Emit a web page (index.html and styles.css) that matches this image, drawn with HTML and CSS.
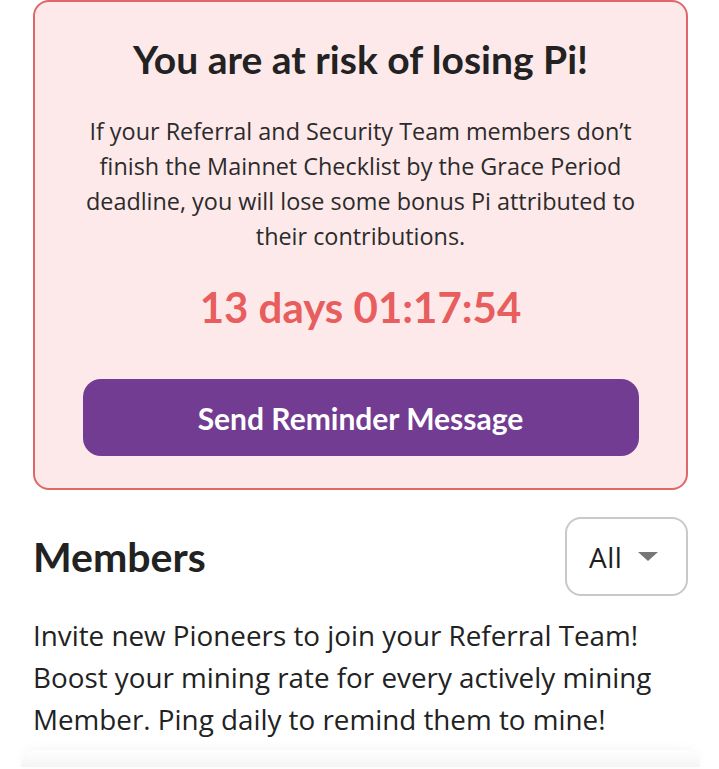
FILE: index.html
```html
<!DOCTYPE html>
<html>
<head>
<meta charset="utf-8">
<link rel="stylesheet" href="styles.css">
</head>
<body>
<div class="page">
  <section class="risk-card">
    <h1 class="risk-title">You are at risk of losing Pi!</h1>
    <p class="risk-text">If your Referral and Security Team members don’t finish the Mainnet Checklist by the Grace Period deadline, you will lose some bonus Pi attributed to their contributions.</p>
    <div class="countdown">13 days 01:17:54</div>
    <button class="reminder-btn">Send Reminder Message</button>
  </section>
  <div class="members-head">
    <h2 class="members-title">Members</h2>
    <div class="filter">
      <span class="filter-label">All</span>
      <span class="filter-caret"></span>
    </div>
  </div>
  <p class="members-text">Invite new Pioneers to join your Referral Team! Boost your mining rate for every actively mining Member. Ping daily to remind them to mine!</p>
  <div class="list-card"></div>
</div>
</body>
</html>
```
FILE: styles.css
```css
* { box-sizing: border-box; }
html, body { margin: 0; padding: 0; background: #fff; }
body { font-family: "Open Sans", "Noto Sans", sans-serif; color: #222; overflow: hidden; height: 769px; }
.page { padding: 0 31px 0 33px; }
.risk-card {
  background: #fde9ea;
  border: 2px solid #e06767;
  border-radius: 16px;
  padding: 35px 24px 32px;
  text-align: center;
}
.risk-title { margin: 0; font-family: Lato, sans-serif; font-size: 39px; font-weight: 700; line-height: 44px; color: #222; }
.risk-text { margin: 33px 16px 0; font-size: 23.4px; line-height: 35px; color: #2b2b2b; }
.countdown { margin-top: 28px; font-family: Lato, sans-serif; font-size: 42px; font-weight: 700; color: #e85d5d; line-height: 50px; }
.reminder-btn {
  display: block; width: 556px; height: 77px; margin: 47px auto 0;
  background: #713c91; color: #fff; border: 0; border-radius: 18px;
  font-family: Lato, sans-serif; font-size: 30px; font-weight: 700;
}
.members-head { display: flex; justify-content: space-between; align-items: center; margin-top: 27px; }
.members-title { margin: 0; font-family: Lato, sans-serif; font-size: 41px; font-weight: 700; color: #222; }
.filter {
  width: 123px; height: 79px; border: 2px solid #c9c9c9; border-radius: 16px;
  display: flex; align-items: center; padding-left: 22px; gap: 16px;
}
.filter-label { font-size: 28px; letter-spacing: 0.5px; color: #1e1e1e; }
.filter-caret { width: 0; height: 0; border-left: 10px solid transparent; border-right: 10px solid transparent; border-top: 9px solid #777; }
.members-text { margin: 18px 0 0; font-size: 27.8px; line-height: 42px; color: #222; }
.list-card {
  margin: 10px -12px 0; height: 17px; border-radius: 16px 16px 0 0;
  background: linear-gradient(#fff, #f4f4f4);
  box-shadow: 0 -2px 12px rgba(0,0,0,0.04);
}
```
